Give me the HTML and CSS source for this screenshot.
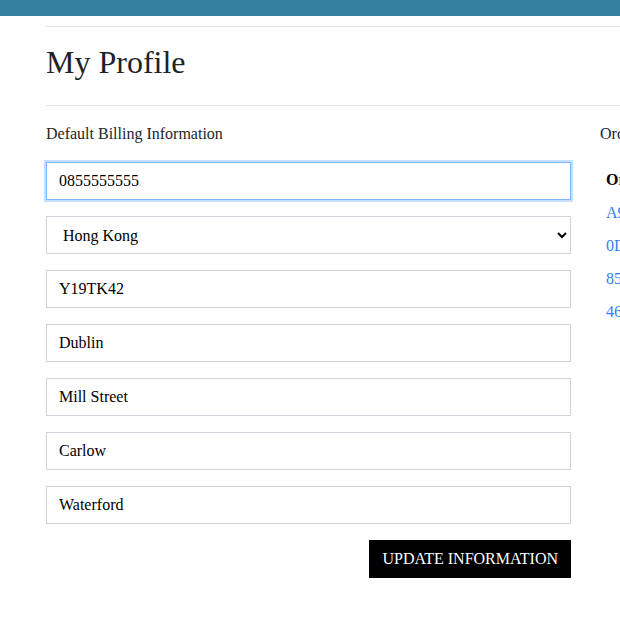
FILE: index.html
```html
<!DOCTYPE html>
<html lang="en">
<head>
<meta charset="utf-8">
<title>My Profile</title>
<link rel="stylesheet" href="styles.css">
</head>
<body>
<div class="topbar"></div>
<main class="page">
  <hr class="rule rule-top">
  <h1 class="title">My Profile</h1>
  <hr class="rule">
  <div class="columns">
    <form class="billing">
      <p class="label">Default Billing Information</p>
      <input class="field field-focus" type="text" value="0855555555">
      <select class="field select">
        <option>Hong Kong</option>
        <option>Ireland</option>
      </select>
      <input class="field" type="text" value="Y19TK42">
      <input class="field" type="text" value="Dublin">
      <input class="field" type="text" value="Mill Street">
      <input class="field" type="text" value="Carlow">
      <input class="field" type="text" value="Waterford">
      <div class="actions">
        <button class="btn" type="button">UPDATE INFORMATION</button>
      </div>
    </form>
    <section class="orders">
      <p class="label">Orders</p>
      <table class="order-table">
        <thead><tr><th>Order ID</th><th>Date</th></tr></thead>
        <tbody>
          <tr><td><a href="#">A9F3C21E7B</a></td><td>2021-03-02</td></tr>
          <tr><td><a href="#">0D7E41B9A2</a></td><td>2021-02-18</td></tr>
          <tr><td><a href="#">85C2F0A13D</a></td><td>2021-01-27</td></tr>
          <tr><td><a href="#">46B8E9D0C5</a></td><td>2020-12-11</td></tr>
        </tbody>
      </table>
    </section>
  </div>
</main>
</body>
</html>
```
FILE: styles.css
```css
html, body {
  margin: 0;
  padding: 0;
  overflow: hidden;
  background: #ffffff;
}
body {
  font-family: "Liberation Serif", "Times New Roman", serif;
  font-size: 16px;
  color: #212529;
}
.topbar {
  height: 16px;
  background: #35809e;
}
.page {
  padding-left: 46px;
  width: 900px;
}
.rule {
  border: 0;
  border-top: 1px solid #e4e4e4;
  margin: 0;
}
.rule-top {
  margin-top: 10px;
}
.title {
  font-size: 32px;
  font-weight: normal;
  margin: 0;
  padding: 17px 0 25px;
  line-height: 36px;
  color: #1e2329;
}
.columns {
  display: grid;
  grid-template-columns: 525px 280px;
  column-gap: 29px;
}
.billing {
  display: flex;
  flex-direction: column;
  gap: 16px;
}
.label {
  margin: 19px 0 0;
  line-height: 18px;
  height: 18px;
  color: #212529;
}
.billing .label {
  margin-bottom: 3px;
}
.field {
  box-sizing: border-box;
  height: 38px;
  width: 525px;
  margin: 0;
  padding: 0 12px;
  border: 1px solid #ced4da;
  border-radius: 0;
  background: #ffffff;
  font-family: "Liberation Serif", "Times New Roman", serif;
  font-size: 16px;
  color: #000000;
  outline: none;
}
.field-focus {
  border-color: #80b5ff;
  box-shadow: 0 0 0 2px #c6defc;
}
.select {
  padding: 0 8px 0 12px;
}
.actions {
  display: flex;
  justify-content: flex-end;
}
.btn {
  height: 38px;
  padding: 0 13px;
  border: 0;
  border-radius: 0;
  background: #000000;
  color: #ffffff;
  font-family: "Liberation Serif", "Times New Roman", serif;
  font-size: 16px;
  cursor: pointer;
}
.orders {
  display: flex;
  flex-direction: column;
}
.order-table {
  border-collapse: collapse;
  margin-top: 20px;
}
.order-table th,
.order-table td {
  text-align: left;
  padding: 8px 20px 8px 6px;
  line-height: 17px;
}
.order-table th {
  font-weight: bold;
  color: #000000;
}
.order-table a {
  color: #2f7ff0;
  text-decoration: none;
}
```
